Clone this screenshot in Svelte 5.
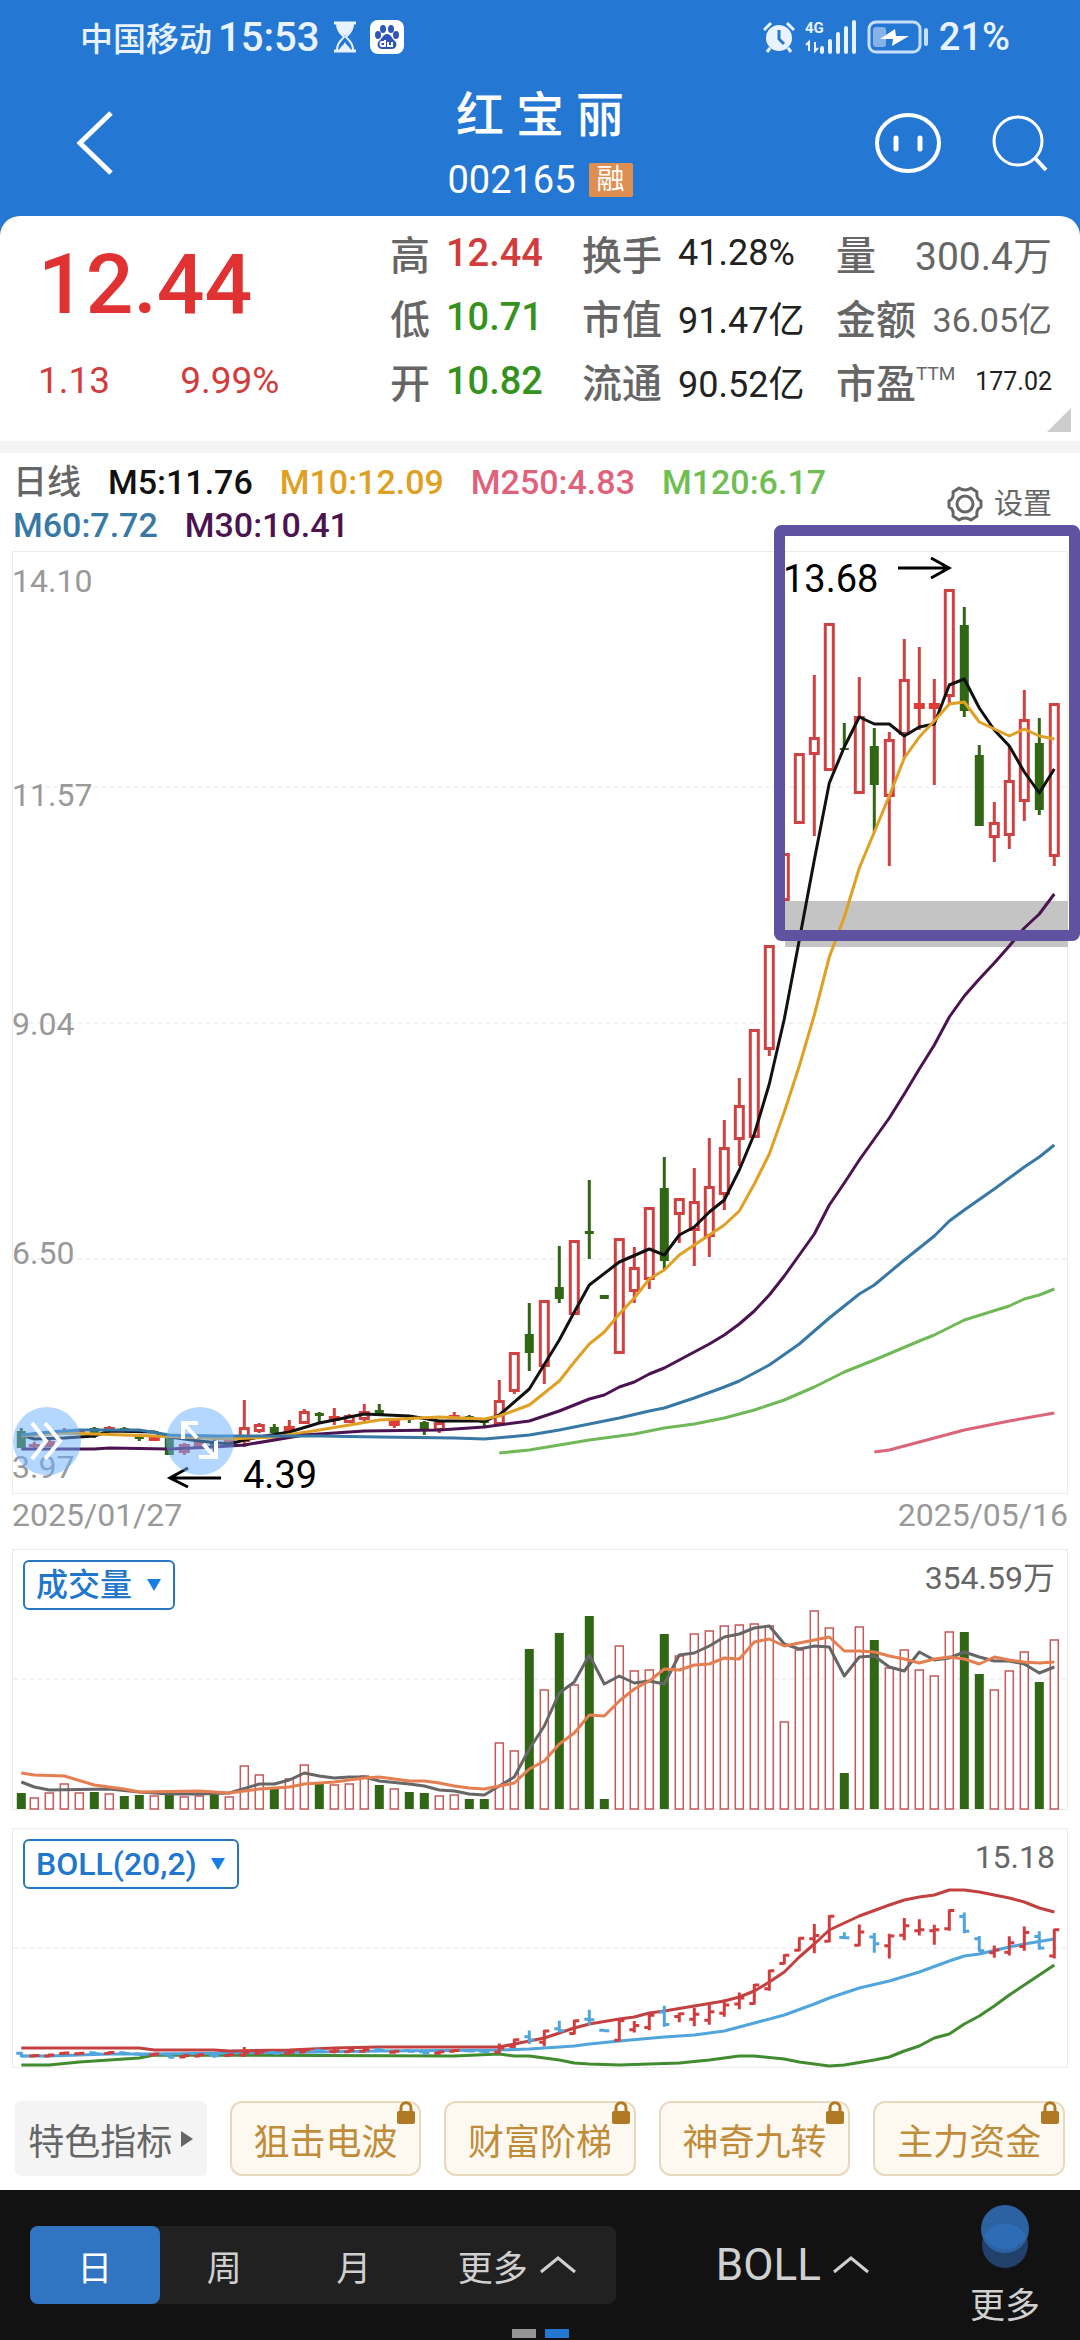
<!-- App.svelte -->
<script>
  const legend = [
    { text: 'M5:11.76', tone: 'm5' },
    { text: 'M10:12.09', tone: 'm10' },
    { text: 'M250:4.83', tone: 'm250' },
    { text: 'M120:6.17', tone: 'm120' },
    { text: 'M60:7.72', tone: 'm60' },
    { text: 'M30:10.41', tone: 'm30' }
  ];

  const prices = [
    { label: '高', value: '12.44', tone: 'up' },
    { label: '低', value: '10.71', tone: 'down' },
    { label: '开', value: '10.82', tone: 'down' }
  ];
  const ratios = [
    { label: '换手', value: '41.28%' },
    { label: '市值', value: '91.47亿' },
    { label: '流通', value: '90.52亿' }
  ];

  const axis = [
    { text: '14.10', y: 592 },
    { text: '11.57', y: 806 },
    { text: '9.04', y: 1035 },
    { text: '6.50', y: 1264 },
    { text: '3.97', y: 1478 }
  ];
  const gridLines = [787, 1023, 1259];

  // direction, high, body top, body bottom, low
  const candles = [
    ['g', 1428, 1431, 1448, 1448], ['r', 1442, 1444, 1447, 1449], ['r', 1439, 1441, 1447, 1447],
    ['r', 1428, 1430, 1433, 1433], ['r', 1431, 1431, 1434, 1434], ['g', 1427, 1428, 1434, 1438],
    ['r', 1426, 1427, 1432, 1432], ['g', 1427, 1428, 1432, 1432], ['g', 1436, 1436, 1439, 1441],
    ['r', 1435, 1436, 1441, 1441], ['g', 1437, 1437, 1455, 1455], ['r', 1443, 1444, 1453, 1455],
    ['r', 1439, 1440, 1447, 1447], ['g', 1438, 1443, 1446, 1452], ['r', 1439, 1440, 1444, 1444],
    ['r', 1400, 1427, 1442, 1447], ['r', 1423, 1424, 1432, 1433], ['g', 1424, 1427, 1433, 1433],
    ['r', 1420, 1426, 1432, 1432], ['r', 1409, 1411, 1424, 1424], ['g', 1412, 1413, 1416, 1422],
    ['r', 1408, 1416, 1421, 1425], ['r', 1414, 1415, 1423, 1423], ['r', 1404, 1411, 1420, 1421],
    ['g', 1404, 1410, 1414, 1414], ['r', 1418, 1420, 1426, 1428], ['g', 1415, 1415, 1420, 1423],
    ['g', 1421, 1422, 1430, 1435], ['r', 1422, 1422, 1431, 1433], ['r', 1412, 1415, 1419, 1419],
    ['g', 1415, 1416, 1418, 1418], ['g', 1420, 1420, 1423, 1426], ['r', 1380, 1400, 1425, 1425],
    ['r', 1352, 1352, 1392, 1394], ['g', 1303, 1334, 1353, 1371], ['r', 1300, 1300, 1367, 1384],
    ['g', 1246, 1287, 1299, 1303], ['r', 1240, 1240, 1315, 1315], ['g', 1180, 1231, 1234, 1259],
    ['g', 1295, 1295, 1299, 1299], ['r', 1238, 1238, 1354, 1354], ['r', 1247, 1267, 1292, 1303],
    ['r', 1207, 1207, 1280, 1289], ['g', 1157, 1188, 1261, 1269], ['r', 1198, 1198, 1215, 1243],
    ['r', 1168, 1201, 1231, 1266], ['r', 1138, 1186, 1237, 1257], ['r', 1120, 1147, 1195, 1210],
    ['r', 1078, 1105, 1140, 1166], ['r', 1029, 1029, 1138, 1138], ['r', 945, 945, 1050, 1056],
    ['r', 853, 853, 901, 901], ['r', 753, 753, 824, 824], ['r', 675, 737, 755, 836],
    ['r', 623, 623, 771, 771], ['g', 723, 748, 750, 750], ['r', 677, 716, 794, 794],
    ['g', 728, 746, 785, 832], ['r', 732, 739, 797, 866], ['r', 639, 679, 735, 758],
    ['r', 647, 703, 709, 730], ['r', 679, 703, 709, 785], ['r', 589, 589, 697, 703],
    ['g', 607, 625, 711, 717], ['g', 745, 755, 826, 826], ['r', 802, 822, 838, 862],
    ['r', 747, 780, 836, 849], ['r', 690, 719, 802, 821], ['g', 718, 743, 810, 815],
    ['r', 703, 703, 857, 866]
  ];

  // moving averages, pairs of day index and height on the chart
  const averages = [
    { tone: 'm5', points: [[0,1435],[1,1439],[3,1438],[5,1436],[6,1431],[9,1432],[10,1437],[12,1441],[14,1444],[15,1440],[16,1437],[18,1432],[20,1423],[23,1414],[26,1416],[28,1421],[31,1421],[32,1415],[34,1389],[36,1340],[37,1312],[38,1285],[40,1262],[42,1249],[43,1255],[44,1235],[45,1227],[46,1212],[47,1200],[48,1170],[49,1134],[50,1084],[51,1019],[52,940],[53,860],[54,783],[55,747],[56,717],[57,724],[58,724],[59,736],[60,727],[61,724],[62,685],[63,679],[64,708],[65,730],[66,746],[67,772],[68,793],[69,769]] },
    { tone: 'm10', points: [[0,1436],[3,1433],[5,1434],[9,1436],[14,1439],[17,1437],[20,1430],[24,1420],[28,1417],[31,1419],[32,1416],[34,1405],[36,1381],[37,1362],[38,1344],[39,1332],[40,1314],[41,1298],[42,1279],[43,1270],[44,1255],[45,1245],[46,1235],[47,1225],[48,1211],[49,1184],[50,1154],[51,1112],[52,1066],[53,1015],[54,957],[55,917],[56,868],[57,832],[58,796],[59,758],[60,737],[61,721],[62,704],[63,702],[64,722],[65,729],[66,736],[67,729],[68,736],[69,739]] },
    { tone: 'm30', points: [[0,1449],[5,1449],[6,1448],[10,1449],[13,1447],[15,1445],[19,1435],[23,1431],[28,1430],[31,1427],[34,1421],[36,1411],[38,1399],[39,1395],[40,1387],[41,1382],[42,1374],[43,1368],[44,1360],[45,1352],[46,1344],[47,1335],[48,1324],[49,1311],[50,1295],[51,1276],[52,1255],[53,1234],[54,1205],[55,1183],[56,1160],[57,1139],[58,1118],[59,1094],[60,1069],[61,1045],[62,1017],[63,996],[64,979],[65,963],[66,946],[67,928],[68,914],[69,894]] },
    { tone: 'm60', points: [[0,1435],[2,1432],[4,1430],[8,1430],[10,1435],[13,1436],[20,1436],[24,1437],[29,1438],[31,1439],[34,1435],[36,1430],[38,1424],[40,1418],[42,1411],[43,1408],[45,1398],[47,1387],[48,1381],[50,1365],[52,1344],[54,1318],[56,1294],[57,1285],[59,1260],[61,1236],[62,1221],[63,1210],[65,1189],[67,1167],[68,1157],[69,1145]] },
    { tone: 'm120', points: [[32,1453],[34,1450],[36,1445],[38,1440],[41,1434],[43,1428],[45,1424],[47,1418],[49,1410],[51,1400],[53,1387],[55,1372],[57,1360],[60,1341],[61,1335],[63,1320],[66,1306],[67,1299],[68,1295],[69,1289]] },
    { tone: 'm250', points: [[57,1452],[58,1450],[60,1442],[63,1430],[66,1421],[69,1413]] }
  ];

  const volumes = [16,12,17,26,17,17,16,13,14,14,14,13,14,14,13,44,35,20,31,45,25,25,26,34,24,21,17,16,14,15,10,10,67,59,160,120,176,125,193,10,164,139,140,175,154,176,179,184,185,186,184,88,160,199,182,36,183,169,142,160,140,134,178,177,135,120,139,158,127,170];
  const volumeLines = [
    { tone: 'v5', points: [[0,27],[1,22],[2,19],[6,20],[8,17],[10,15],[12,15],[14,16],[16,25],[17,25],[18,29],[19,36],[20,33],[21,31],[22,32],[23,32],[24,28],[26,25],[27,23],[28,19],[29,18],[30,15],[31,14],[32,23],[33,32],[34,60],[35,83],[36,116],[37,127],[38,154],[39,125],[40,133],[41,126],[42,128],[43,125],[44,154],[45,156],[46,163],[47,172],[48,175],[49,181],[50,183],[51,165],[52,160],[53,163],[54,162],[55,133],[56,152],[57,153],[58,142],[59,138],[60,157],[61,149],[62,151],[63,157],[64,152],[65,148],[66,148],[67,145],[68,136],[69,142]] },
    { tone: 'v10', points: [[0,36],[1,34],[3,33],[5,24],[7,20],[8,17],[12,18],[14,16],[16,20],[18,22],[19,25],[21,27],[23,31],[24,32],[26,28],[27,28],[28,26],[29,23],[30,21],[31,20],[32,23],[33,26],[34,40],[35,48],[36,65],[37,76],[38,94],[39,93],[40,108],[41,120],[42,128],[43,140],[44,139],[45,144],[46,145],[47,151],[48,150],[49,167],[50,170],[51,163],[52,166],[53,169],[54,172],[55,158],[56,158],[57,157],[58,153],[59,150],[60,146],[61,150],[62,152],[63,150],[64,145],[65,152],[66,149],[67,147],[68,146],[69,147]] }
  ];

  const bands = [
    { tone: 'lower', points: [[0,237],[2,237],[4,234],[8,230],[9,227],[29,228],[32,226],[33,228],[34,228],[35,230],[36,232],[37,235],[38,236],[40,237],[42,236],[44,235],[46,232],[47,230],[48,228],[49,228],[51,231],[52,234],[54,238],[55,237],[57,232],[58,229],[59,223],[60,218],[61,210],[62,206],[63,196],[64,188],[65,178],[66,167],[67,157],[68,147],[69,137]] },
    { tone: 'middle', points: [[0,228],[2,228],[6,226],[9,226],[20,224],[24,223],[32,222],[34,221],[35,220],[37,218],[38,216],[40,213],[43,209],[45,207],[47,203],[49,195],[51,187],[53,176],[54,170],[56,160],[58,153],[60,144],[62,133],[63,128],[64,126],[66,119],[67,116],[69,111]] },
    { tone: 'upper', points: [[0,220],[8,220],[9,222],[13,222],[14,223],[18,222],[21,220],[24,219],[32,219],[33,216],[35,210],[36,205],[37,200],[38,196],[40,191],[41,189],[42,185],[43,183],[45,178],[47,173],[48,169],[49,163],[50,154],[51,144],[52,129],[53,116],[54,102],[56,88],[58,77],[59,72],[60,69],[61,67],[62,62],[63,62],[64,64],[65,67],[66,70],[67,74],[68,80],[69,84]] }
  ];

  const features = ['狙击电波', '财富阶梯', '神奇九转', '主力资金'];
  const periods = ['日', '周', '月'];
  let period = $state('日');

  const dayX = (i) => (i === 0 ? 21.3 : 19.3 + 15 * i);
  const line = (points) => points.map(([i, y]) => `${dayX(i)},${y}`).join(' ');
  const volumeLine = (points) => points.map(([i, h]) => `${dayX(i)},${260 - h}`).join(' ');
  // price position on the main chart -> position on the BOLL chart
  const bollY = (y) => 82.5 + (y - 589) * 0.1695;

  function bollBar([dir, high, top, bottom, low], i) {
    const x = dayX(i);
    const left = bollY(dir === 'r' ? bottom : top);
    const right = bollY(dir === 'r' ? top : bottom);
    return `M${x} ${bollY(high) - 1}V${bollY(low) + 1}M${x - 5} ${left}H${x}M${x} ${right}H${x + 5}`;
  }
</script>

<div class="app">
  <header>
    <div class="status">
      <span class="carrier">中国移动</span>
      <span class="clock">15:53</span>
      <svg class="hourglass" viewBox="0 0 24 32" width="24" height="32">
        <path d="M1 2H23M1 30H23" stroke="#e8f3ff" stroke-width="3" />
        <path d="M4 3C4 11 9 13 11 16C9 19 4 21 4 29M20 3C20 11 15 13 13 16C15 19 20 21 20 29" fill="none" stroke="#e8f3ff" stroke-width="2" />
        <path d="M4 3H20C20 10 15 13 12 15C9 13 4 10 4 3ZM6 29C8 25 11 24 12 21C13 24 16 25 18 29Z" fill="#e8f3ff" />
      </svg>
      <svg viewBox="0 0 34 34" width="34" height="34">
        <rect width="34" height="34" rx="8" fill="#fff" />
        <g fill="#2d55b5">
          <ellipse cx="8" cy="15" rx="3" ry="4" /><ellipse cx="13" cy="9" rx="3" ry="4" />
          <ellipse cx="21" cy="9" rx="3" ry="4" /><ellipse cx="26" cy="15" rx="3" ry="4" />
          <path d="M17 14C21 14 22 19 25 21C28 24 26 29 22 29H12C8 29 6 24 9 21C12 19 13 14 17 14Z" />
        </g>
        <path d="M15 20V26H12C10 26 10 22 12 22H15M18 22V26H22V22" fill="none" stroke="#fff" stroke-width="2" />
      </svg>
      <div class="status-right">
        <svg viewBox="0 0 32 32" width="32" height="32">
          <circle cx="16" cy="17" r="13" fill="#e8f3ff" />
          <path d="M1 9L8 2M31 9L24 2M7 27L4 31M25 27L28 31" stroke="#e8f3ff" stroke-width="3" />
          <path d="M16 9V18L21 23" fill="none" stroke="#2577d4" stroke-width="3" />
        </svg>
        <svg viewBox="0 0 52 34" width="52" height="34">
          <text x="0" y="13" class="net">4G</text>
          <path d="M4 31V22L1 25M10 22V31L13 28" fill="none" stroke="#e8f3ff" stroke-width="2" />
          <path d="M17 32V28M25 32V21M33 32V14M41 32V8M49 32V2" stroke="#e8f3ff" stroke-width="4" stroke-linecap="round" />
        </svg>
        <svg viewBox="0 0 62 34" width="62" height="34">
          <rect x="2" y="2" width="51" height="30" rx="7" fill="none" stroke="#c7dffa" stroke-width="3" />
          <rect x="6" y="7" width="13" height="20" rx="3" fill="#83b3e9" />
          <path d="M28 9L13 19H26L25 26L42 16H29Z" fill="#fff" />
          <path d="M59 10V24" stroke="#c7dffa" stroke-width="4" stroke-linecap="round" />
        </svg>
        <span class="battery">21%</span>
      </div>
    </div>

    <div class="nav">
      <button class="back" aria-label="返回">
        <svg viewBox="0 0 40 66" width="40" height="66"><path d="M36 3L5 33L36 63" fill="none" stroke="#fff" stroke-width="5" /></svg>
      </button>
      <div class="stock">
        <h1>红 宝 丽</h1>
        <div class="code">002165 <span class="tag">融</span></div>
      </div>
      <div class="actions">
        <button aria-label="助手">
          <svg viewBox="0 0 68 62" width="68" height="62">
            <ellipse cx="34" cy="31" rx="31" ry="28" fill="none" stroke="#fff" stroke-width="4" />
            <path d="M22 26V37M46 26V37" stroke="#fff" stroke-width="5" stroke-linecap="round" />
          </svg>
        </button>
        <button aria-label="搜索">
          <svg viewBox="0 0 58 58" width="58" height="58">
            <circle cx="26" cy="27" r="24" fill="none" stroke="#fff" stroke-width="3" />
            <path d="M43 44L54 56" stroke="#fff" stroke-width="4" />
          </svg>
        </button>
      </div>
    </div>
  </header>

  <section class="quote">
    <div class="last">
      <div class="price">12.44</div>
      <div class="change"><span>1.13</span><span>9.99%</span></div>
    </div>
    <dl class="prices">
      {#each prices as item}
        <div><dt>{item.label}</dt><dd class={item.tone}>{item.value}</dd></div>
      {/each}
    </dl>
    <dl class="ratios">
      {#each ratios as item}
        <div><dt>{item.label}</dt><dd>{item.value}</dd></div>
      {/each}
    </dl>
    <dl class="totals">
      <div><dt>量</dt><dd class="large">300.4万</dd></div>
      <div><dt>金额</dt><dd>36.05亿</dd></div>
      <div><dt>市盈<sup>TTM</sup></dt><dd class="small">177.02</dd></div>
    </dl>
    <svg class="corner" viewBox="0 0 24 24" width="24" height="24"><path d="M24 0V24H0Z" fill="#ccc" /></svg>
  </section>

  <section class="legend">
    <div class="legend-items">
      <span class="kind">日线</span>
      {#each legend as item}
        <span class={item.tone}>{item.text}</span>
      {/each}
    </div>
    <button class="settings">
      <svg viewBox="0 0 36 38" width="36" height="38" fill="none" stroke="#666" stroke-width="3">
        <path d="M12 3Q18 7 24 3L30 7Q29 14 34 16V22Q29 24 30 31L24 35Q18 31 12 35L6 31Q7 24 2 22V16Q7 14 6 7Z" stroke-linejoin="round" />
        <circle cx="18" cy="19" r="8" />
      </svg>
      设置
    </button>
  </section>

  <section class="chart">
    <svg class="plot" viewBox="0 551 1080 943">
      <rect x="12.5" y="551.5" width="1055" height="942" class="box" />
      {#each gridLines as y}
        <path d="M13 {y}H1067" class="grid" />
      {/each}
      <rect x="785" y="901" width="283" height="46" fill="#c4c4c4" />
      {#each axis as item}
        <text x="12" y={item.y} class="axis">{item.text}</text>
      {/each}

      {#each candles as [dir, high, top, bottom, low], i}
        {#if dir === 'g'}
          <path d="M{dayX(i)} {high}V{low}" stroke="#306614" stroke-width="3" />
          <rect x={dayX(i) - 4.5} y={top} width="9" height={bottom - top} fill="#306614" />
        {:else}
          <path d="M{dayX(i)} {high}V{top}M{dayX(i)} {bottom}V{low}" stroke="#d04242" stroke-width="3" />
          {#if bottom - top < 8}
            <rect x={dayX(i) - 5.5} y={top} width="11" height={bottom - top} fill="#dd3c38" />
          {:else}
            <rect x={dayX(i) - 4} y={top + 1.5} width="8" height={bottom - top - 3} fill="#fff" stroke="#d04242" stroke-width="3" />
          {/if}
        {/if}
      {/each}

      {#each averages as item}
        <polyline points={line(item.points)} class="average {item.tone}" />
      {/each}

      <text x="783" y="592" class="mark">13.68</text>
      <path d="M898 568H949M931 558L949 568L931 578" class="arrow" />
      <text x="243" y="1488" class="mark">4.39</text>
      <path d="M221 1478H171M188 1468L170 1478L188 1487" class="arrow" />
      <rect x="779.5" y="530.5" width="295" height="405" rx="2" class="frame" />
    </svg>
    <button class="float unfold" aria-label="展开">
      <svg viewBox="0 0 68 68"><path d="M19 16L33 34L19 52M32 16L47 34L32 52" /></svg>
    </button>
    <button class="float expand" aria-label="全屏">
      <svg viewBox="0 0 68 68"><path d="M32 16H17V32M17 16L31 31M37 37L49 50M33 50H50V34" /></svg>
    </button>
  </section>

  <div class="dates"><span>2025/01/27</span><span>2025/05/16</span></div>

  <section class="panel">
    <svg class="plot" viewBox="0 0 1080 261">
      <rect x="12.5" y="0.5" width="1055" height="260" class="box" />
      <path d="M13 130H1067" class="grid" />
      {#each volumes as h, i}
        {#if candles[i][0] === 'g'}
          <rect x={dayX(i) - 4.5} y={261 - h - 1} width="9" height={h} fill="#306614" />
        {:else}
          <rect x={dayX(i) - 4} y={261 - h} width="8" height={h - 1} fill="#fff" stroke="#c25a58" stroke-width="1.5" />
        {/if}
      {/each}
      {#each volumeLines as item}
        <polyline points={volumeLine(item.points)} class="average {item.tone}" />
      {/each}
    </svg>
    <label class="picker">
      <select aria-label="副图指标一"><option>成交量</option></select>
      <svg viewBox="0 0 14 12" width="14" height="12"><path d="M0 0H14L7 12Z" fill="#167ee6" /></svg>
    </label>
    <span class="peak">354.59万</span>
  </section>

  <section class="panel">
    <svg class="plot" viewBox="0 0 1080 240">
      <rect x="12.5" y="0.5" width="1055" height="239" class="box" />
      <path d="M13 120H1067" class="grid" />
      {#each bands as item}
        <polyline points={line(item.points)} class="average {item.tone}" />
      {/each}
      {#each candles as candle, i}
        <path d={bollBar(candle, i)} fill="none" stroke={candle[0] === 'g' ? '#50a5dc' : '#d23c3c'} stroke-width="3" />
      {/each}
    </svg>
    <label class="picker">
      <select aria-label="副图指标二"><option>BOLL(20,2)</option></select>
      <svg viewBox="0 0 14 12" width="14" height="12"><path d="M0 0H14L7 12Z" fill="#167ee6" /></svg>
    </label>
    <span class="peak">15.18</span>
  </section>

  <section class="features">
    <button class="all">
      特色指标
      <svg viewBox="0 0 12 16" width="12" height="16"><path d="M0 0L12 8L0 16Z" fill="#666" /></svg>
    </button>
    {#each features as name}
      <button class="feature">
        {name}
        <svg class="lock" viewBox="0 0 18 24" width="18" height="24">
          <path d="M4 11V7C4 0 14 0 14 7V11" fill="none" stroke="#b07a24" stroke-width="3" />
          <rect y="10" width="18" height="13" rx="2" fill="#b07a24" />
        </svg>
      </button>
    {/each}
  </section>

  <footer>
    <div class="periods">
      {#each periods as name}
        <button class:active={period === name} onclick={() => (period = name)}>{name}</button>
      {/each}
      <button class="more">
        更多
        <svg viewBox="0 0 38 18" width="38" height="18"><path d="M2 16L19 2L36 16" /></svg>
      </button>
    </div>
    <button class="indicator">
      BOLL
      <svg viewBox="0 0 38 18" width="38" height="18"><path d="M2 16L19 2L36 16" /></svg>
    </button>
    <button class="menu">
      <svg viewBox="0 0 48 64" width="48" height="64">
        <circle cx="24" cy="40" r="23" fill="#22416a" />
        <circle cx="24" cy="24" r="24" fill="#2c61a2" />
        <path d="M3 32A23 23 0 0 1 45 32A24 24 0 0 1 3 32Z" fill="#2f6cb6" />
      </svg>
      更多
    </button>
    <div class="dots"><i></i><i class="on"></i></div>
  </footer>
</div>

<style>
  :global(body) {
    margin: 0;
    background: #fff;
  }

  .app {
    font-family: Roboto, 'Noto Sans CJK SC', sans-serif;
    color: #222;
    background: #fff;
  }

  button {
    margin: 0;
    padding: 0;
    border: 0;
    background: none;
    font: inherit;
    color: inherit;
    cursor: pointer;
  }

  svg {
    display: block;
    flex-shrink: 0;
  }

  /* Header, runs on behind the rounded corners of the quote card */
  header {
    margin-bottom: -20px;
    padding-bottom: 20px;
    background: #2577d4;
    color: #fff;
  }

  .status {
    display: flex;
    align-items: center;
    height: 74px;
    padding: 0 70px 0 80px;
    color: #e8f3ff;
  }

  .carrier {
    font-size: 33px;
    font-weight: 500;
  }

  .clock {
    margin: 0 14px 0 6px;
    font-size: 40px;
    font-weight: 500;
  }

  .hourglass {
    margin-right: 13px;
  }

  .status-right {
    display: flex;
    align-items: center;
    gap: 10px;
    margin-left: auto;
  }

  .net {
    font-size: 15px;
    font-weight: 700;
    fill: #e8f3ff;
  }

  .battery {
    font-size: 38px;
    font-weight: 500;
  }

  .nav {
    display: grid;
    grid-template-columns: 1fr auto 1fr;
    align-items: center;
    padding: 10px 30px 4px;
  }

  .back,
  .actions {
    padding-bottom: 10px;
  }

  .back {
    justify-self: start;
    margin-left: 45px;
  }

  .actions {
    display: flex;
    justify-content: flex-end;
    gap: 50px;
  }

  .stock {
    text-align: center;
  }

  h1 {
    margin: 0;
    font-size: 48px;
    font-weight: 500;
    line-height: 64px;
  }

  .code {
    display: flex;
    align-items: center;
    justify-content: center;
    gap: 13px;
    font-size: 38px;
    line-height: 64px;
  }

  .tag {
    width: 44px;
    background: #de8f4f;
    border-radius: 2px;
    font-size: 28px;
    line-height: 34px;
  }

  /* Quote */
  .quote {
    position: relative;
    display: grid;
    grid-template-columns: 390fr 192fr 254fr 216fr;
    padding: 5px 28px 28px 0;
    background: #fff;
    border-radius: 20px 20px 0 0;
  }

  .last {
    padding-left: 38px;
    color: #d23c3c;
  }

  .price {
    font-size: 84px;
    font-weight: 500;
    line-height: 128px;
    color: #e03232;
  }

  .change {
    display: flex;
    gap: 70px;
    font-size: 37px;
    line-height: 64px;
  }

  dl {
    margin: 0;
  }

  dl div {
    display: flex;
    align-items: center;
    height: 64px;
  }

  dt {
    font-size: 40px;
    font-weight: 500;
    color: #666;
    white-space: nowrap;
  }

  dd {
    margin: 0 0 0 16px;
    font-size: 36px;
    white-space: nowrap;
  }

  .prices dd {
    font-size: 38px;
    font-weight: 500;
  }

  .up {
    color: #d23c3c;
  }

  .down {
    color: #35921f;
  }

  .totals div {
    justify-content: space-between;
  }

  .totals dd {
    margin: 0;
    font-size: 34px;
    color: #666;
  }

  .totals .large {
    font-size: 39px;
  }

  .totals .small {
    font-size: 25px;
    color: #222;
  }

  sup {
    font-size: 19px;
    font-weight: 400;
    vertical-align: 18px;
    line-height: 1;
  }

  .corner {
    position: absolute;
    right: 9px;
    bottom: 9px;
  }

  /* Legend */
  .legend {
    display: flex;
    justify-content: space-between;
    padding: 8px 28px 4px 13px;
    border-top: 12px solid #f4f4f4;
  }

  .legend-items {
    display: flex;
    flex-wrap: wrap;
    column-gap: 27px;
    max-width: 860px;
    font-size: 34px;
    font-weight: 500;
    line-height: 43px;
  }

  .kind {
    color: #666;
  }

  .m5 { color: #111; stroke: #111; }
  .m10 { color: #dfa024; stroke: #dfa024; }
  .m250 { color: #e0627a; stroke: #dc6478; }
  .m120 { color: #6fbe52; stroke: #70b858; }
  .m60 { color: #3878a5; stroke: #3878a5; }
  .m30 { color: #4b1450; stroke: #4b1450; }

  .settings {
    display: flex;
    align-items: center;
    gap: 11px;
    font-size: 29px;
    line-height: 43px;
    color: #666;
  }

  /* Charts */
  .chart,
  .panel {
    position: relative;
  }

  .plot {
    width: 100%;
    height: auto;
    overflow: visible;
  }

  .box {
    fill: none;
    stroke: #ececec;
  }

  .grid {
    stroke: #f2f2f2;
    stroke-width: 2;
    stroke-dasharray: 5 3;
  }

  .axis {
    font-size: 32px;
    fill: #999;
  }

  .mark {
    font-size: 38px;
    fill: #000;
  }

  .arrow {
    fill: none;
    stroke: #000;
    stroke-width: 3;
  }

  .frame {
    fill: none;
    stroke: #5f52a0;
    stroke-width: 11;
    stroke-linejoin: round;
  }

  .average {
    fill: none;
    stroke-width: 3;
    stroke-linejoin: round;
  }

  .v5 { stroke: #666; }
  .v10 { stroke: #e57e50; }
  .upper { stroke: #c34040; }
  .middle { stroke: #50a5dc; }
  .lower { stroke: #428c30; }

  .float {
    position: absolute;
    bottom: 2%;
    width: 68px;
    height: 68px;
    border-radius: 50%;
    background: rgba(105, 175, 255, 0.5);
  }

  .float path {
    fill: none;
    stroke: #fff;
    stroke-width: 4;
  }

  .unfold {
    left: 1.2%;
  }

  .expand {
    left: 15.4%;
  }

  .dates {
    display: flex;
    justify-content: space-between;
    padding: 0 12px 13px;
    font-size: 32px;
    line-height: 42px;
    color: #999;
  }

  .panel {
    margin-bottom: 18px;
  }

  .picker {
    position: absolute;
    top: 11px;
    left: 23px;
    display: flex;
    align-items: center;
    height: 50px;
    box-sizing: border-box;
    padding-right: 12px;
    border: 2px solid #2878c0;
    border-radius: 6px;
    background: #fff;
  }

  select {
    appearance: none;
    margin: 0;
    padding: 0 14px 0 11px;
    border: 0;
    background: none;
    font-family: inherit;
    font-size: 32px;
    font-weight: 500;
    line-height: 46px;
    color: #2277cc;
  }

  .peak {
    position: absolute;
    top: 8px;
    right: 25px;
    font-size: 32px;
    line-height: 42px;
    color: #666;
  }

  /* Feature buttons */
  .features {
    display: grid;
    grid-template-columns: repeat(5, 1fr);
    gap: 23px;
    padding: 15px 15px 14px;
  }

  .features button {
    position: relative;
    box-sizing: border-box;
    height: 75px;
    font-size: 36px;
    white-space: nowrap;
  }

  .features .all {
    display: flex;
    align-items: center;
    justify-content: center;
    gap: 9px;
    background: #f4f4f4;
    border-radius: 6px;
    color: #666;
  }

  .feature {
    border: 2px solid #e8d9be;
    border-radius: 12px;
    background: #fdf9f1;
    color: #c08c3a;
  }

  .lock {
    position: absolute;
    top: -2px;
    right: 4px;
  }

  /* Bottom bar */
  footer {
    position: relative;
    display: flex;
    align-items: center;
    height: 150px;
    box-sizing: border-box;
    padding: 0 40px 0 30px;
    background: #121212;
    color: #d0d0d0;
    font-size: 35px;
  }

  footer path {
    fill: none;
    stroke: #d0d0d0;
    stroke-width: 3;
  }

  .menu path {
    fill: #2f6cb6;
    stroke: none;
  }

  .periods {
    display: grid;
    grid-template-columns: 130fr 130fr 130fr 198fr;
    flex: 0 0 58%;
    background: #212121;
    border-radius: 8px;
  }

  .periods button {
    height: 78px;
    border-radius: 8px;
  }

  .periods .active {
    background: #3175c2;
    color: #fff;
  }

  .periods .more,
  .indicator {
    display: flex;
    align-items: center;
    justify-content: center;
    gap: 11px;
  }

  .indicator {
    margin: 0 auto;
    font-size: 44px;
  }

  .menu {
    display: flex;
    flex-direction: column;
    align-items: center;
    gap: 14px;
    padding-top: 6px;
    line-height: 48px;
  }

  .dots {
    position: absolute;
    bottom: 2px;
    left: 0;
    right: 0;
    display: flex;
    justify-content: center;
    gap: 9px;
  }

  .dots i {
    width: 24px;
    height: 9px;
    background: #949494;
  }

  .dots .on {
    background: #2577d4;
  }
</style>
